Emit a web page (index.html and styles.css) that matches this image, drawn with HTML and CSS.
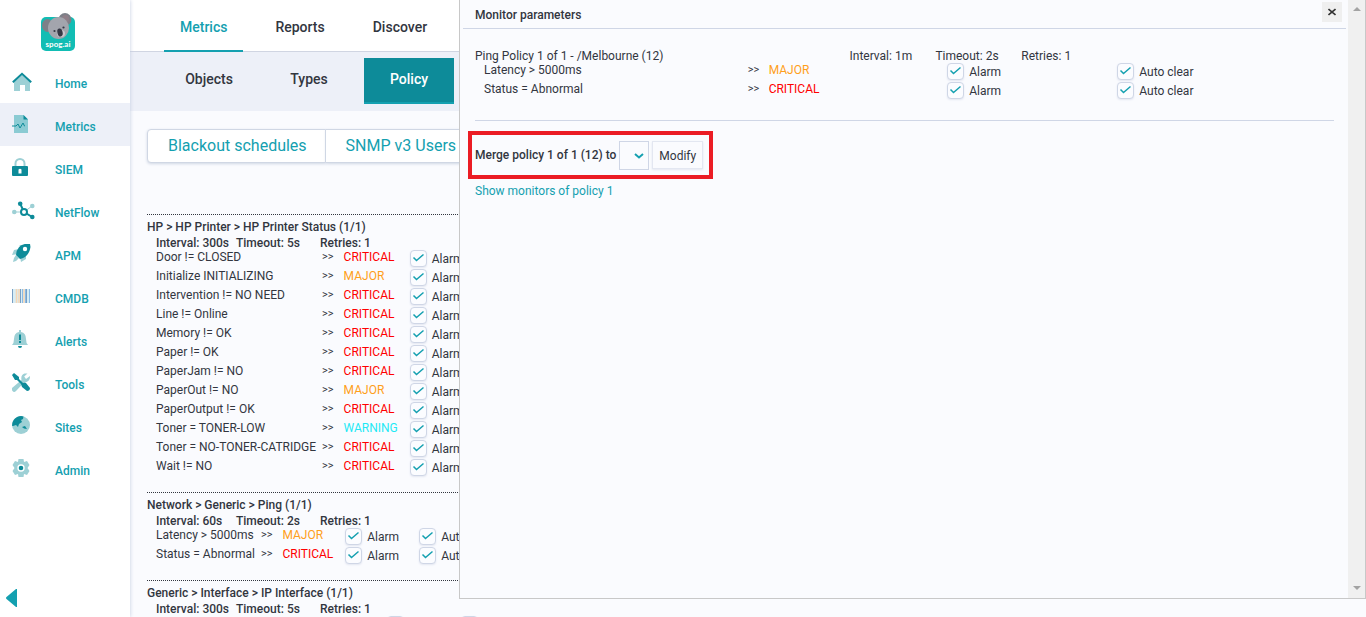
FILE: index.html
```html
<!DOCTYPE html>
<html lang="en">
<head>
<meta charset="utf-8">
<title>spog.ai - Policy</title>
<link rel="stylesheet" href="styles.css">
</head>
<body>
<div class="app">
  <aside class="sidebar">
    <a class="logo" href="#" aria-label="spog.ai">
      <svg width="34" height="38" viewBox="0 0 34 38">
        <rect x="0" y="4" width="34" height="34" rx="5" fill="#12bdb4"/>
        <ellipse cx="6.500" cy="12.500" rx="5.500" ry="6.500" fill="#7d8088"/>
        <circle cx="24" cy="6.500" r="6.500" fill="#7d8088"/>
        <ellipse cx="24.500" cy="6" rx="3.500" ry="4" fill="#8f7f88"/>
        <ellipse cx="17.500" cy="15" rx="10.500" ry="11" fill="#a3a5ad"/>
        <ellipse cx="20" cy="20.500" rx="4" ry="3.500" fill="#c9c9cf"/>
        <ellipse cx="19" cy="19.500" rx="2.600" ry="4" transform="rotate(-14 19 19.500)" fill="#363845"/>
        <circle cx="13.500" cy="18" r="1.100" fill="#363845"/>
        <circle cx="22.500" cy="14.500" r="1.100" fill="#363845"/>
        <text x="17" y="34" text-anchor="middle" class="logo-text">spog.ai</text>
      </svg>
    </a>
    <nav class="menu">
      <a class="menu-item" href="#">
        <svg class="icon" viewBox="0 0 20 20"><path class="lt" d="M2 10 10 3l8 7v9h-5v-6H8v6H2z"/><path class="dk-line" d="M.8 10.300 10 1.800l9.200 8.500"/></svg>
        <span>Home</span>
      </a>
      <a class="menu-item menu-item-active" href="#">
        <svg class="icon" viewBox="0 0 20 20"><path class="mid" d="M2 0h9.500L16 4.500V18H2z"/><path class="dk" d="M11.500 0 16 4.500h-4.500z"/><path class="thin" d="M0 11h4l2-2 2 4 3-5 1.500 3H13"/></svg>
        <span>Metrics</span>
      </a>
      <a class="menu-item" href="#">
        <svg class="icon" viewBox="0 0 20 20"><path class="lt-line" stroke-width="2.500" d="M3.500 9V5.500a4.500 4.500 0 0 1 9 0V9"/><path class="dk" d="M0 9q0-1 1-1h14q1 0 1 1v8q0 1-1 1H1q-1 0-1-1z"/><path fill="#fff" d="M6.500 11.500q1.500-1.500 3 0v4h-3z"/></svg>
        <span>SIEM</span>
      </a>
      <a class="menu-item" href="#">
        <svg class="icon icon-wide" viewBox="0 0 23 20"><path class="lt-thin" d="M2 11h10l8-6"/><circle class="lt" cx="2.300" cy="11" r="2.300"/><circle class="lt" cx="20.300" cy="5" r="2.300"/><path class="dk-line" d="m8.300 3 3.700 8 8.200 5"/><circle class="dk" cx="8.200" cy="2.800" r="2.300"/><circle class="dk" cx="20.300" cy="16" r="2.300"/><circle class="dk-line" cx="12" cy="11" r="3"/></svg>
        <span>NetFlow</span>
      </a>
      <a class="menu-item" href="#">
        <svg class="icon" viewBox="0 0 20 20"><path class="lt" d="m7 5-5 1-2 5 6-1zM8 13l6-2v4l-5 3zM4 11l3 3-3 3-3 1 1-4z"/><path class="dk" d="M4 11Q5 0 15-.2l3 .2.500 3Q17 13 8 15z"/><circle cx="13" cy="5" r="2.200" fill="#fff"/></svg>
        <span>APM</span>
      </a>
      <a class="menu-item" href="#">
        <svg class="icon" viewBox="0 0 20 20"><path fill="#d8edf4" d="M0 2h18v14H0z"/><path stroke="#7a9fc4" d="M.5 2v14M8.500 2v14M14.500 2v14"/><path stroke="#f6d6b5" stroke-width="1.500" d="M4.500 2v14M7 2v14M12 2v14"/><path stroke="#8bbce8" d="M10.500 2v14M13.500 2v14M17.500 2v14"/></svg>
        <span>CMDB</span>
      </a>
      <a class="menu-item" href="#">
        <svg class="icon" viewBox="0 0 20 20"><path class="lt" d="M7 2V0h2v2q5 1 5 7 0 4 2 6H0q2-2 2-6 0-6 5-7z"/><path class="dk" d="M6 16h4q0 2-2 2t-2-2zM7 4.500h2V10H7zM7 11h2v2H7z"/></svg>
        <span>Alerts</span>
      </a>
      <a class="menu-item" href="#">
        <svg class="icon" viewBox="0 0 20 20"><path class="lt" d="M0 15 9.500 7q-1-5 3-6.500l3 .1-3.300 3 1.800 2.500L18 3q.5 6-6 6.500L4 18q-2 2-3.500 0T0 15z"/><path class="dk" d="m0 2 2-2 5 4v2l4 4q2-1 3 0l4 5q0 3-3 3l-5-4-1-3-4-4H3z"/></svg>
        <span>Tools</span>
      </a>
      <a class="menu-item" href="#">
        <svg class="icon" viewBox="0 0 20 20"><circle class="lt" cx="9" cy="9" r="9"/><path class="dk" d="M.2 10A9 9 0 0 1 11.500.400L11 3l-2 1 1 2-3 2-1 3-2-2-3 1zM10 11l3-1 2 3-3-.5z"/></svg>
        <span>Sites</span>
      </a>
      <a class="menu-item" href="#">
        <svg class="icon" viewBox="0 0 20 20"><path class="lt" d="M6.500 0h5l.5 3 3-1 2.500 4-2 3 2 3L15 16l-3-1-.5 3h-5L6 15l-3 1-2.500-4 2-3-2-3L3 2l3 1z"/><circle cx="9" cy="9" r="3.700" fill="#fff"/><circle class="dk" cx="9" cy="9" r="2.300"/></svg>
        <span>Admin</span>
      </a>
    </nav>
    <button class="collapse" type="button" aria-label="Collapse menu">
      <svg width="11" height="18" viewBox="0 0 11 18"><path fill="#14a0b0" d="M11 0v18h-1L.5 10q-1-1 0-2L10 0z"/></svg>
    </button>
  </aside>

  <main class="main">
    <nav class="tabs">
      <a class="tab tab-active" href="#">Metrics</a>
      <a class="tab" href="#">Reports</a>
      <a class="tab" href="#">Discover</a>
    </nav>
    <nav class="subtabs">
      <a class="subtab" href="#">Objects</a>
      <a class="subtab" href="#">Types</a>
      <a class="subtab subtab-active" href="#">Policy</a>
    </nav>
    <div class="content">
      <div class="button-group">
        <button type="button">Blackout schedules</button>
        <button type="button">SNMP v3 Users</button>
      </div>

      <section class="policy">
        <h2>HP &gt; HP Printer &gt; HP Printer Status (1/1)</h2>
        <div class="timing"><span>Interval: 300s</span><span>Timeout: 5s</span><span>Retries: 1</span></div>
        <table class="rules">
          <tr><td>Door != CLOSED</td><td>&gt;&gt;</td><td class="critical">CRITICAL</td><td><label><input type="checkbox" checked>Alarm</label></td><td><label><input type="checkbox" checked>Auto clear</label></td></tr>
          <tr><td>Initialize INITIALIZING</td><td>&gt;&gt;</td><td class="major">MAJOR</td><td><label><input type="checkbox" checked>Alarm</label></td><td><label><input type="checkbox" checked>Auto clear</label></td></tr>
          <tr><td>Intervention != NO NEED</td><td>&gt;&gt;</td><td class="critical">CRITICAL</td><td><label><input type="checkbox" checked>Alarm</label></td><td><label><input type="checkbox" checked>Auto clear</label></td></tr>
          <tr><td>Line != Online</td><td>&gt;&gt;</td><td class="critical">CRITICAL</td><td><label><input type="checkbox" checked>Alarm</label></td><td><label><input type="checkbox" checked>Auto clear</label></td></tr>
          <tr><td>Memory != OK</td><td>&gt;&gt;</td><td class="critical">CRITICAL</td><td><label><input type="checkbox" checked>Alarm</label></td><td><label><input type="checkbox" checked>Auto clear</label></td></tr>
          <tr><td>Paper != OK</td><td>&gt;&gt;</td><td class="critical">CRITICAL</td><td><label><input type="checkbox" checked>Alarm</label></td><td><label><input type="checkbox" checked>Auto clear</label></td></tr>
          <tr><td>PaperJam != NO</td><td>&gt;&gt;</td><td class="critical">CRITICAL</td><td><label><input type="checkbox" checked>Alarm</label></td><td><label><input type="checkbox" checked>Auto clear</label></td></tr>
          <tr><td>PaperOut != NO</td><td>&gt;&gt;</td><td class="major">MAJOR</td><td><label><input type="checkbox" checked>Alarm</label></td><td><label><input type="checkbox" checked>Auto clear</label></td></tr>
          <tr><td>PaperOutput != OK</td><td>&gt;&gt;</td><td class="critical">CRITICAL</td><td><label><input type="checkbox" checked>Alarm</label></td><td><label><input type="checkbox" checked>Auto clear</label></td></tr>
          <tr><td>Toner = TONER-LOW</td><td>&gt;&gt;</td><td class="warning">WARNING</td><td><label><input type="checkbox" checked>Alarm</label></td><td><label><input type="checkbox" checked>Auto clear</label></td></tr>
          <tr><td>Toner = NO-TONER-CATRIDGE</td><td>&gt;&gt;</td><td class="critical">CRITICAL</td><td><label><input type="checkbox" checked>Alarm</label></td><td><label><input type="checkbox" checked>Auto clear</label></td></tr>
          <tr><td>Wait != NO</td><td>&gt;&gt;</td><td class="critical">CRITICAL</td><td><label><input type="checkbox" checked>Alarm</label></td><td><label><input type="checkbox" checked>Auto clear</label></td></tr>
        </table>
      </section>

      <section class="policy">
        <h2>Network &gt; Generic &gt; Ping (1/1)</h2>
        <div class="timing"><span>Interval: 60s</span><span>Timeout: 2s</span><span>Retries: 1</span></div>
        <table class="rules">
          <tr><td>Latency &gt; 5000ms</td><td>&gt;&gt;</td><td class="major">MAJOR</td><td><label><input type="checkbox" checked>Alarm</label></td><td><label><input type="checkbox" checked>Auto clear</label></td></tr>
          <tr><td>Status = Abnormal</td><td>&gt;&gt;</td><td class="critical">CRITICAL</td><td><label><input type="checkbox" checked>Alarm</label></td><td><label><input type="checkbox" checked>Auto clear</label></td></tr>
        </table>
      </section>

      <section class="policy">
        <h2>Generic &gt; Interface &gt; IP Interface (1/1)</h2>
        <div class="timing"><span>Interval: 300s</span><span>Timeout: 5s</span><span>Retries: 1</span></div>
        <table class="rules">
          <tr><td>Operational status = Down</td><td>&gt;&gt;</td><td class="critical">CRITICAL</td><td><label><input type="checkbox" checked>Alarm</label></td><td><label><input type="checkbox" checked>Auto clear</label></td></tr>
        </table>
      </section>
    </div>
  </main>
</div>

<div class="dialog" role="dialog" aria-labelledby="dialog-title">
  <div class="dialog-page">
    <header class="dialog-header">
      <h1 id="dialog-title">Monitor parameters</h1>
      <button class="close" type="button" aria-label="Close"><svg width="8" height="8" viewBox="0 0 8 8"><path d="m.5 1 7 6M7.500 1l-7 6" stroke="#333" stroke-width="1.600"/></svg></button>
    </header>
    <div class="dialog-body">
      <div class="summary"><span>Ping Policy 1 of 1 - /Melbourne (12)</span><span>Interval: 1m</span><span>Timeout: 2s</span><span>Retries: 1</span></div>
      <table class="rules rules-wide">
        <tr><td>Latency &gt; 5000ms</td><td>&gt;&gt;</td><td class="major">MAJOR</td><td><label><input type="checkbox" checked>Alarm</label></td><td><label><input type="checkbox" checked>Auto clear</label></td></tr>
        <tr><td>Status = Abnormal</td><td>&gt;&gt;</td><td class="critical">CRITICAL</td><td><label><input type="checkbox" checked>Alarm</label></td><td><label><input type="checkbox" checked>Auto clear</label></td></tr>
      </table>
      <hr class="rule">
      <form class="merge">
        <label for="merge-target">Merge policy 1 of 1 (12) to</label>
        <select id="merge-target"><option></option></select>
        <button type="button">Modify</button>
      </form>
      <a class="link" href="#">Show monitors of policy 1</a>
    </div>
  </div>
  <div class="scrollbar">
    <svg width="8" height="5" viewBox="0 0 8 5"><path fill="#a3a3a3" d="M0 4 4 0l4 4z"/></svg>
    <svg width="8" height="5" viewBox="0 0 8 5"><path fill="#a3a3a3" d="M0 0h8L4 4z"/></svg>
  </div>
</div>
</body>
</html>
```
FILE: styles.css
```css
* { box-sizing: border-box; }

body {
  margin: 0;
  height: 100vh;
  overflow: hidden;
  position: relative;
  font: 12px/16px Roboto, "Liberation Sans", sans-serif;
  color: #32363f;
  background: #fafbfe;
}

a { color: #14a0b0; text-decoration: none; }
button, select, input { font: inherit; color: inherit; margin: 0; }
h1, h2 { margin: 0; font-size: 12px; font-weight: 500; }

.app { display: grid; grid-template-columns: 130px 1fr; height: 100%; }

.sidebar {
  display: flex;
  flex-direction: column;
  background: #fff;
  box-shadow: 0 0 4px #c3cbe0;
  z-index: 1;
}
.logo { display: flex; padding: 13px 0 9px 41px; }
.logo-text { font: 700 8px Lato, sans-serif; fill: #fff; }
.menu-item {
  display: flex;
  align-items: center;
  height: 43px;
  padding-left: 12px;
  font-weight: 500;
}
.menu-item span { padding-top: 4px; }
.menu-item-active { background: #edf0f8; }
.icon { width: 20px; height: 20px; margin-right: 23px; flex: none; }
.icon-wide { width: 23px; margin-right: 20px; }
.lt { fill: #9dd0d5; }
.mid { fill: #8bcbd3; }
.dk { fill: #0d8b99; }
.lt-line, .lt-thin, .dk-line, .thin { fill: none; stroke: #9dd0d5; stroke-width: 2; }
.lt-thin { stroke-width: 1; }
.dk-line { stroke: #0d8b99; }
circle.dk-line { fill: #fff; }
.thin { stroke: #0d8b99; stroke-width: 1; }
.collapse {
  display: flex;
  align-self: flex-start;
  margin: auto 0 10px 6px;
  padding: 0;
  border: 0;
  background: none;
}

.main { display: flex; flex-direction: column; min-width: 0; overflow: hidden; }
.tabs {
  display: flex;
  flex: none;
  gap: 16px;
  height: 52px;
  padding-left: 34px;
  background: #fff;
  border-bottom: 1px solid #d0d5e2;
}
.tab {
  height: 52px;
  padding: 0 16px;
  font-size: 14px;
  font-weight: 500;
  line-height: 54px;
  color: #32363f;
}
.tab-active { color: #14a0b0; border-bottom: 2px solid #14a0b0; }
.subtabs {
  display: flex;
  flex: none;
  gap: 10px;
  height: 59px;
  padding: 6px 0 0 34px;
  background: #edf0f8;
}
.subtab {
  width: 90px;
  height: 46px;
  font-size: 14px;
  font-weight: 500;
  line-height: 42px;
  text-align: center;
  color: #32363f;
}
.subtab-active { color: #fff; background: #0d8b99; border-bottom: 2px solid #14a0b0; }

.content { flex: none; padding: 18px 16px 0 17px; }
.button-group { display: flex; margin-bottom: 51px; }
.button-group button {
  height: 34px;
  padding: 0 18px 0 20px;
  border: 1px solid #d0d7e4;
  background: #fff;
  color: #14a0b0;
  font-size: 16px;
  box-shadow: 0 1px 3px #d0d7e4;
}
.button-group button:first-child { border-radius: 4px 0 0 4px; }
.button-group button:last-child { border-radius: 0 4px 4px 0; border-left: 0; }

.policy { border-top: 1px dotted #32363f; padding: 4px 0 14px; }
.timing {
  display: grid;
  grid-template-columns: 80px 84px 1fr;
  height: 15px;
  padding-left: 9px;
  font-weight: 500;
}

.rules { border-collapse: collapse; margin-left: 9px; white-space: nowrap; }
.rules tr { height: 19px; }
.rules td { padding: 0 12px 0 0; vertical-align: top; line-height: 14px; }
.rules td:nth-child(1) { padding-right: 6px; }
.rules td:nth-child(2) { padding-right: 10px; font-size: 11px; }
.rules td:nth-child(4) { padding-right: 20px; }
.rules label { display: flex; gap: 5px; height: 17px; line-height: 18px; }
.critical { color: #f00; }
.major { color: #ff9f1a; }
.warning { color: #1fe9f5; }

input[type="checkbox"] {
  appearance: none;
  flex: none;
  width: 17px;
  height: 17px;
  border: 1px solid #cfd6e6;
  border-radius: 4px;
  box-shadow: 0 1px 2px #e3e7f1;
}
input[type="checkbox"]:checked {
  background: #fbfcff url("data:image/svg+xml,%3Csvg xmlns='http://www.w3.org/2000/svg' viewBox='0 0 15 15'%3E%3Cpath d='M2.500 6.500l3 3 7-6' fill='none' stroke='%2314a0b0' stroke-width='1.500'/%3E%3C/svg%3E") center / 15px 15px no-repeat;
}

.dialog {
  position: absolute;
  top: 0;
  left: 459px;
  right: 0;
  bottom: 18px;
  z-index: 2;
  display: flex;
  background: #fafbfe;
  border: 1px solid #c8c8c8;
  border-top: 0;
}
.dialog-page { flex: 1; min-width: 0; padding: 0 2px 0 3px; }
.dialog-header {
  display: flex;
  justify-content: space-between;
  align-items: center;
  height: 29px;
  padding: 0 4px 4px 12px;
  border-bottom: 1px solid #cfd6e6;
}
.dialog-header h1 { padding-top: 5px; }
.close {
  display: grid;
  place-items: center;
  width: 20px;
  height: 20px;
  padding: 0;
  border: 0;
  background: #efefef;
}
.dialog-body { padding: 19px 12px 0; }
.summary { display: grid; grid-template-columns: 43.6% 10% 10% 1fr; height: 15px; }
.rules-wide { table-layout: fixed; width: 99%; }
.rules-wide td:nth-child(1) { width: 31%; }
.rules-wide td:nth-child(2) { width: 21px; }
.rules-wide td:nth-child(3) { width: 21%; }
.rules-wide td:nth-child(4) { width: 20%; }
.rule { margin: 19px 0 10px; border: 0; border-top: 1px solid #cfd6e6; }
.merge {
  display: flex;
  align-items: center;
  gap: 3px;
  width: max-content;
  height: 48px;
  margin: 0 0 4px -7px;
  padding: 0 6px 0 3px;
  border: 4px solid #eb1c24;
  font-weight: 500;
}
.merge select {
  appearance: none;
  width: 30px;
  height: 29px;
  border: 1px solid #cfd6e6;
  border-radius: 0;
  background: #fafbfe url("data:image/svg+xml,%3Csvg xmlns='http://www.w3.org/2000/svg' viewBox='0 0 10 6'%3E%3Cpath d='M1 1l4 3.500 4-3.500' fill='none' stroke='%2314a0b0' stroke-width='2'/%3E%3C/svg%3E") 14px 11px / 10px 6px no-repeat;
}
.merge button {
  height: 28px;
  padding: 1px 6px 0;
  border: 1px solid #e3e7f1;
  background: #fafbfe;
  box-shadow: 0 1px 2px #e3e7f1;
  font-weight: 400;
}
.scrollbar {
  display: flex;
  flex-direction: column;
  justify-content: space-between;
  align-items: center;
  width: 17px;
  padding: 7px 0;
  background: #f0f0f0;
}
```
